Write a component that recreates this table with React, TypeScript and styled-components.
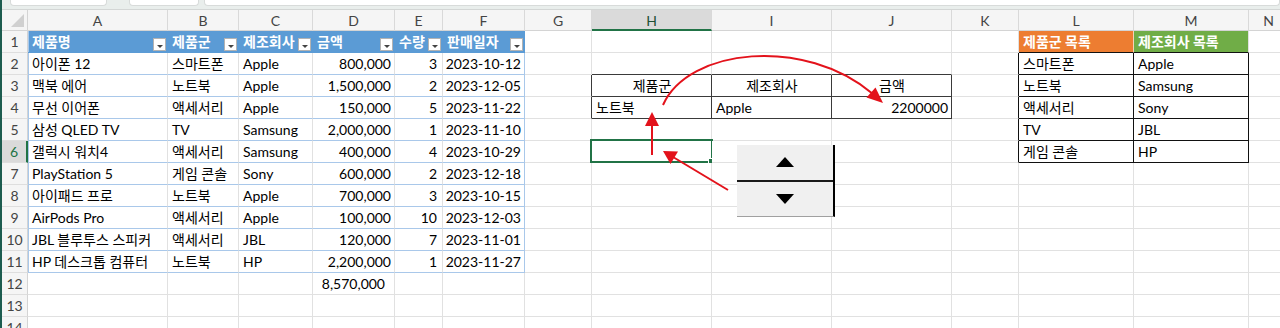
import React from 'react';
import styled, { createGlobalStyle } from 'styled-components';

const GlobalStyle = createGlobalStyle`
  html, body { margin: 0; padding: 0; background: #ffffff; }
  body {
    width: 1280px; height: 328px; overflow: hidden;
    font-family: Lato, "Noto Sans CJK KR", sans-serif;
    -webkit-font-smoothing: antialiased;
  }
`;

const GRID = '#e1e1e1';
const TBL_LINE = '#a9c8ea';
const TBL_BLUE = '#5b9bd5';
const DARK = '#3a3a3a';
const BLACK = '#111111';
const SEL = '#217346';

const COLS = [
  { k: 'A', w: 140 }, { k: 'B', w: 71 }, { k: 'C', w: 74 }, { k: 'D', w: 82 },
  { k: 'E', w: 48 }, { k: 'F', w: 82 }, { k: 'G', w: 67 }, { k: 'H', w: 120 },
  { k: 'I', w: 120 }, { k: 'J', w: 120 }, { k: 'K', w: 67 }, { k: 'L', w: 115 },
  { k: 'M', w: 115 }, { k: 'N', w: 40 },
];
const ROW_COUNT = 14;

const TABLE_HEAD = ['제품명', '제품군', '제조회사', '금액', '수량', '판매일자'];
const TABLE_ROWS = [
  ['아이폰 12', '스마트폰', 'Apple', '800,000', '3', '2023-10-12'],
  ['맥북 에어', '노트북', 'Apple', '1,500,000', '2', '2023-12-05'],
  ['무선 이어폰', '액세서리', 'Apple', '150,000', '5', '2023-11-22'],
  ['삼성 QLED TV', 'TV', 'Samsung', '2,000,000', '1', '2023-11-10'],
  ['갤럭시 워치4', '액세서리', 'Samsung', '400,000', '4', '2023-10-29'],
  ['PlayStation 5', '게임 콘솔', 'Sony', '600,000', '2', '2023-12-18'],
  ['아이패드 프로', '노트북', 'Apple', '700,000', '3', '2023-10-15'],
  ['AirPods Pro', '액세서리', 'Apple', '100,000', '10', '2023-12-03'],
  ['JBL 블루투스 스피커', '액세서리', 'JBL', '120,000', '7', '2023-11-01'],
  ['HP 데스크톱 컴퓨터', '노트북', 'HP', '2,200,000', '1', '2023-11-27'],
];
const CAT_LIST = ['스마트폰', '노트북', '액세서리', 'TV', '게임 콘솔'];
const MAKER_LIST = ['Apple', 'Samsung', 'Sony', 'JBL', 'HP'];

type Align = 'left' | 'center' | 'right';
interface Spec {
  text?: string;
  align?: Align;
  bold?: boolean;
  color?: string;
  bg?: string;
  br: string;
  bb: string;
  filter?: boolean;
  selected?: boolean;
  tableLeft?: boolean;
  padR?: number;
}

const Frame = styled.div`
  position: relative;
  width: 1280px;
  height: 328px;
  overflow: hidden;
  box-sizing: border-box;
  border-left: 2px solid #1d5c4f;
  background: #ffffff;
`;

const Toolbar = styled.div`
  height: 10px;
  box-sizing: border-box;
  background: #e9eeec;
  border-bottom: 1px solid #d3d6d5;
  display: flex;
  gap: 0;
  padding-left: 8px;
  align-items: flex-start;
`;

const ToolBox = styled.div<{ $w: number; $ml: number; $grow?: boolean }>`
  width: ${(p) => p.$w}px;
  margin-left: ${(p) => p.$ml}px;
  flex: ${(p) => (p.$grow ? '1' : 'none')};
  height: 5px;
  background: #ffffff;
  border: 1px solid #d8dbda;
  border-top: none;
  border-radius: 0 0 4px 4px;
`;

const Sheet = styled.div`
  display: grid;
  grid-template-columns: 26px ${COLS.map((c) => `${c.w}px`).join(' ')};
  grid-template-rows: 21px repeat(${ROW_COUNT}, 22px);
`;

const Corner = styled.div`
  position: relative;
  background: #f5f5f5;
  border-right: 1px solid #d4d4d4;
  border-bottom: 1px solid #d4d4d4;
  box-sizing: border-box;
  &::after {
    content: '';
    position: absolute;
    right: 3px;
    bottom: 3px;
    width: 0;
    height: 0;
    border-left: 13px solid transparent;
    border-bottom: 13px solid #d0d0d0;
  }
`;

const ColHead = styled.div<{ $sel?: boolean }>`
  box-sizing: border-box;
  background: ${(p) => (p.$sel ? '#dadada' : '#f5f5f5')};
  border-right: 1px solid #d9d9d9;
  border-bottom: ${(p) => (p.$sel ? `2px solid ${SEL}` : '1px solid #d4d4d4')};
  color: ${(p) => (p.$sel ? '#1f5135' : '#444444')};
  font-size: 14px;
  display: flex;
  align-items: center;
  justify-content: center;
  padding-top: ${(p) => (p.$sel ? '1px' : '0')};
`;

const RowHead = styled.div<{ $sel?: boolean }>`
  box-sizing: border-box;
  background: ${(p) => (p.$sel ? '#dadada' : '#f5f5f5')};
  border-right: ${(p) => (p.$sel ? `2px solid ${SEL}` : '1px solid #d4d4d4')};
  border-bottom: 1px solid #dedede;
  color: ${(p) => (p.$sel ? SEL : '#444444')};
  font-size: 14px;
  display: flex;
  align-items: center;
  justify-content: center;
`;

const Cell = styled.div<{
  $align: Align; $bold?: boolean; $color?: string; $bg?: string;
  $br: string; $bb: string; $tableLeft?: boolean; $padR?: number;
}>`
  position: relative;
  box-sizing: border-box;
  min-width: 0;
  background: ${(p) => p.$bg || '#ffffff'};
  border-right: 1px solid ${(p) => p.$br};
  border-bottom: 1px solid ${(p) => p.$bb};
  box-shadow: ${(p) => (p.$tableLeft ? `inset 1px 0 0 ${TBL_LINE}` : 'none')};
  color: ${(p) => p.$color || '#000000'};
  font-weight: ${(p) => (p.$bold ? 700 : 400)};
  font-size: 14px;
  white-space: nowrap;
  display: flex;
  align-items: center;
  justify-content: ${(p) => (p.$align === 'left' ? 'flex-start' : p.$align === 'right' ? 'flex-end' : 'center')};
  padding: 0 ${(p) => p.$padR ?? 3}px 0 4px;
  z-index: ${(p) => (p.$align === 'left' ? 1 : 0)};
`;

const CellText = styled.span`
  line-height: 1;
  padding-top: 1px;
`;

const FilterButton = styled.span`
  position: relative;
  margin-left: auto;
  margin-right: -2px;
  align-self: flex-end;
  margin-bottom: 1px;
  width: 13px;
  height: 13px;
  box-sizing: border-box;
  flex: none;
  background: #ffffff;
  border: 1px solid #b3b3b3;
  &::after {
    content: '';
    position: absolute;
    left: 3px;
    top: 6px;
    width: 0;
    height: 0;
    border-left: 3px solid transparent;
    border-right: 3px solid transparent;
    border-top: 3px solid #444444;
  }
`;

const Selection = styled.span`
  position: absolute;
  left: -2px;
  top: -2px;
  right: -2px;
  bottom: -1px;
  border: 2px solid ${SEL};
  pointer-events: none;
  &::after {
    content: '';
    position: absolute;
    right: -4px;
    bottom: -4px;
    width: 5px;
    height: 5px;
    background: ${SEL};
    border: 1px solid #ffffff;
  }
`;

const SpinBox = styled.div`
  position: absolute;
  left: 735px;
  top: 145px;
  width: 98px;
  height: 72px;
  box-sizing: border-box;
  background: #f0f0f0;
  border-right: 2px solid #000000;
  border-bottom: 1px solid #a0a0a0;
  display: flex;
  flex-direction: column;
  z-index: 3;
`;

const SpinHalf = styled.div`
  flex: 1;
  display: flex;
  align-items: center;
  justify-content: center;
`;

const SpinDivider = styled.div`
  height: 2px;
  background: #1a1a1a;
`;

const Triangle = styled.span<{ $dir: 'up' | 'down' }>`
  width: 0;
  height: 0;
  border-left: 9px solid transparent;
  border-right: 9px solid transparent;
  ${(p) => (p.$dir === 'up' ? 'border-bottom: 10px solid #000;' : 'border-top: 10px solid #000;')}
`;

const Arrows = styled.svg`
  position: absolute;
  left: -2px;
  top: 0;
  width: 1280px;
  height: 328px;
  pointer-events: none;
  z-index: 4;
`;

function specFor(c: number, r: number): Spec {
  // c: 0-based column index (A=0), r: 1-based row
  const col = COLS[c].k;
  const s: Spec = { br: GRID, bb: GRID, align: 'left' };

  // Product table A1:F11
  if (c <= 5 && r >= 1 && r <= 11) {
    s.tableLeft = c === 0;
    if (r === 1) {
      s.text = TABLE_HEAD[c];
      s.bold = true;
      s.color = '#ffffff';
      s.bg = TBL_BLUE;
      s.br = c === 5 ? TBL_BLUE : TBL_BLUE;
      s.bb = TBL_BLUE;
      s.filter = true;
    } else {
      s.text = TABLE_ROWS[r - 2][c];
      s.bb = TBL_LINE;
      if (c === 5) s.br = TBL_LINE;
      if (c >= 3) s.align = 'right';
      if (c === 4) s.padR = 5;
    }
  }
  if (col === 'D' && r === 12) {
    s.text = '8,570,000';
    s.align = 'right';
    s.padR = 9;
  }

  // Lookup box H3:J4
  const inBox = (cc: number, rr: number) => cc >= 7 && cc <= 9 && rr >= 3 && rr <= 4;
  if (inBox(c, r) || inBox(c + 1, r)) s.br = DARK;
  if (inBox(c, r) || inBox(c, r + 1)) s.bb = DARK;
  if (r === 3 && c >= 7 && c <= 9) {
    s.text = ['제품군', '제조회사', '금액'][c - 7];
    s.align = 'center';
  }
  if (r === 4 && c >= 7 && c <= 9) {
    s.text = ['노트북', 'Apple', '2200000'][c - 7];
    s.align = c === 9 ? 'right' : 'left';
  }
  if (col === 'H' && r === 6) s.selected = true;

  // Lists L1:M6
  if ((col === 'L' || col === 'M') && r === 1) {
    s.text = col === 'L' ? '제품군 목록' : '제조회사 목록';
    s.bold = true;
    s.color = '#ffffff';
    s.bg = col === 'L' ? '#ed7d31' : '#70ad47';
    s.bb = BLACK;
    s.br = col === 'L' ? '#f3d2bb' : GRID;
  }
  const inList = (cc: number, rr: number) => cc >= 11 && cc <= 12 && rr >= 2 && rr <= 6;
  if (inList(c, r) || inList(c + 1, r)) s.br = BLACK;
  if (inList(c, r)) s.bb = BLACK;
  if (inList(c, r)) {
    s.text = c === 11 ? CAT_LIST[r - 2] : MAKER_LIST[r - 2];
    s.align = 'left';
  }
  return s;
}

function SheetGrid() {
  const cells: React.ReactNode[] = [];
  cells.push(<Corner key="corner" />);
  COLS.forEach((c) => cells.push(<ColHead key={`h-${c.k}`} $sel={c.k === 'H'}>{c.k}</ColHead>));
  for (let r = 1; r <= ROW_COUNT; r++) {
    cells.push(<RowHead key={`r-${r}`} $sel={r === 6}>{r}</RowHead>);
    COLS.forEach((col, ci) => {
      const s = specFor(ci, r);
      cells.push(
        <Cell
          key={`${col.k}${r}`}
          $align={s.align || 'left'}
          $bold={s.bold}
          $color={s.color}
          $bg={s.bg}
          $br={s.br}
          $bb={s.bb}
          $tableLeft={s.tableLeft}
          $padR={s.padR}
        >
          {s.text && <CellText>{s.text}</CellText>}
          {s.filter && <FilterButton />}
          {s.selected && <Selection />}
        </Cell>
      );
    });
  }
  return <Sheet>{cells}</Sheet>;
}

function ArrowLayer() {
  const red = '#e3121b';
  return (
    <Arrows viewBox="0 0 1280 328">
      <path d="M663 105 C 688 48, 805 36, 873 94" fill="none" stroke={red} strokeWidth="2" />
      <polygon points="883,103 866.5,97.5 875.5,87.5" fill={red} />
      <line x1="652" y1="155" x2="652" y2="124" stroke={red} strokeWidth="2" />
      <polygon points="652,112 645,126 659,126" fill={red} />
      <line x1="728" y1="190" x2="673" y2="157" stroke={red} strokeWidth="2" />
      <polygon points="663,151 678,151.5 670.5,164" fill={red} />
    </Arrows>
  );
}

export default function App() {
  return (
    <>
      <GlobalStyle />
      <Frame>
        <Toolbar>
          <ToolBox $w={95} $ml={0} />
          <ToolBox $w={68} $ml={22} />
          <ToolBox $w={0} $ml={5} $grow />
        </Toolbar>
        <SheetGrid />
        <SpinBox>
          <SpinHalf><Triangle $dir="up" /></SpinHalf>
          <SpinDivider />
          <SpinHalf><Triangle $dir="down" /></SpinHalf>
        </SpinBox>
        <ArrowLayer />
      </Frame>
    </>
  );
}
